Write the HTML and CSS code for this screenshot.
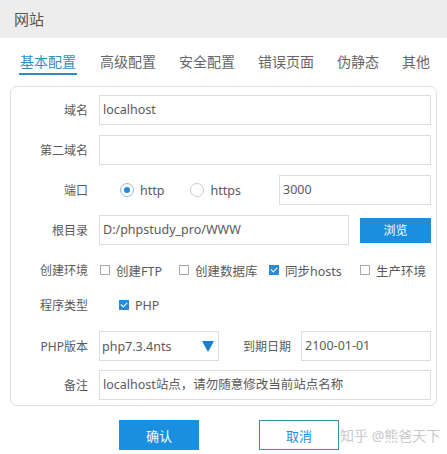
FILE: index.html
```html
<!DOCTYPE html>
<html lang="zh-CN">
<head>
    <meta charset="UTF-8">
    <title>网站</title>
    <link rel="stylesheet" href="styles.css">
</head>
<body>
    <div class="dialog">
        <div class="title-bar">网站</div>

        <div class="tabs">
            <span class="tab active">基本配置</span>
            <span class="tab">高级配置</span>
            <span class="tab">安全配置</span>
            <span class="tab">错误页面</span>
            <span class="tab">伪静态</span>
            <span class="tab">其他</span>
        </div>

        <div class="card">
            <div class="row">
                <label class="row-label">域名</label>
                <div class="field">localhost</div>
            </div>
            <div class="row">
                <label class="row-label">第二域名</label>
                <div class="field"></div>
            </div>
            <div class="row">
                <label class="row-label">端口</label>
                <div class="radio-group">
                    <span class="radio checked"></span><span class="opt-text">http</span>
                    <span class="radio second"></span><span class="opt-text">https</span>
                </div>
                <div class="field port">3000</div>
            </div>
            <div class="row">
                <label class="row-label">根目录</label>
                <div class="field">D:/phpstudy_pro/WWW</div>
                <button class="btn-browse">浏览</button>
            </div>
            <div class="row row-env">
                <label class="row-label">创建环境</label>
                <div class="options">
                    <span class="opt opt-ftp"><span class="check"></span>创建FTP</span>
                    <span class="opt opt-db"><span class="check"></span>创建数据库</span>
                    <span class="opt opt-hosts"><span class="check checked"></span>同步hosts</span>
                    <span class="opt"><span class="check"></span>生产环境</span>
                </div>
            </div>
            <div class="row row-type">
                <label class="row-label">程序类型</label>
                <span class="opt opt-php"><span class="check checked"></span>PHP</span>
            </div>
            <div class="row row-php">
                <label class="row-label">PHP版本</label>
                <div class="select">
                    <span>php7.3.4nts</span>
                    <span class="arrow"></span>
                </div>
                <label class="inline-label">到期日期</label>
                <div class="field">2100-01-01</div>
            </div>
            <div class="row row-note">
                <label class="row-label">备注</label>
                <div class="field">localhost站点，请勿随意修改当前站点名称</div>
            </div>
        </div>

        <div class="actions">
            <button class="btn btn-ok">确认</button>
            <button class="btn btn-cancel">取消</button>
            <span class="watermark">知乎 @熊爸天下</span>
        </div>
    </div>
</body>
</html>
```

FILE: styles.css
```css
body {
    margin: 0;
    background: #fff;
    font-family: "Noto Sans", "Noto Sans CJK SC", sans-serif;
    color: #5a5a5a;
}

.dialog {
    position: relative;
    width: 447px;
    height: 454px;
    overflow: hidden;
}

.title-bar {
    height: 38px;
    line-height: 38px;
    padding-left: 14px;
    background: #ededed;
    font-size: 15px;
    color: #555;
}

/* Tabs */
.tabs {
    display: flex;
    gap: 23px;
    padding: 14px 0 0 20px;
    height: 34px;
    box-sizing: border-box;
    margin-bottom: 14px;
}

.tab {
    font-size: 14px;
    line-height: 20px;
    color: #666;
    height: 21px;
}

.tab.active {
    color: #2f8fc0;
    border-bottom: 2px solid #2f8fc0;
    padding: 0 1px;
    margin-left: -1px;
    margin-right: 0;
}

/* Card */
.card {
    margin: 0 10px;
    border: 1px solid #ddd;
    border-radius: 7px;
    padding: 8px 5px 4px 0;
    height: 320px;
    box-sizing: border-box;
}

.row {
    display: flex;
    align-items: center;
    height: 30px;
    margin-bottom: 10px;
    font-size: 12px;
}

.row-label {
    width: 88px;
    flex-shrink: 0;
    padding-right: 11px;
    box-sizing: border-box;
    text-align: right;
    font-size: 12px;
    color: #5a5a5a;
}

.field {
    flex: 1;
    height: 30px;
    line-height: 28px;
    border: 1px solid #ddd;
    box-sizing: border-box;
    padding-left: 3px;
    font-size: 12.5px;
    color: #5a5a5a;
    white-space: nowrap;
}

.field.port {
    flex: none;
    width: 152px;
    margin-left: auto;
}

/* Radios */
.radio-group {
    display: flex;
    align-items: center;
    padding-left: 21px;
}

.radio {
    width: 14px;
    height: 14px;
    border: 1px solid #ccc;
    border-radius: 50%;
    box-sizing: border-box;
    position: relative;
    margin-right: 6px;
}

.radio.second {
    margin-left: 26px;
}

.radio.checked {
    border-color: #8cbde6;
}

.radio.checked::after {
    content: "";
    position: absolute;
    left: 3px;
    top: 3px;
    width: 6px;
    height: 6px;
    border-radius: 50%;
    background: #2a86d6;
}

.opt-text {
    font-size: 12.5px;
    color: #5a5a5a;
}

.btn-browse {
    width: 71px;
    height: 25px;
    margin-left: 11px;
    border: none;
    background: #1a8fe0;
    color: #fff;
    font-family: inherit;
    font-size: 12px;
    padding: 0;
}

/* Checkboxes */
.row-env {
    margin-bottom: 5px;
}

.row-type {
    margin-bottom: 11px;
}

.row-php {
    margin-bottom: 9px;
}

.options {
    display: flex;
    align-items: center;
}

.opt {
    display: flex;
    align-items: center;
    font-size: 12.5px;
    color: #5a5a5a;
    white-space: nowrap;
}

.opt-ftp { width: 80px; padding-left: 1px; box-sizing: border-box; }
.opt-db { width: 90px; }
.opt-hosts { width: 91px; }

.opt-php {
    margin-left: 20px;
}

.check {
    width: 10px;
    height: 10px;
    border: 1px solid #aaa;
    box-sizing: border-box;
    margin-right: 6px;
    position: relative;
}

.check.checked {
    border: none;
    background: #2b8ad6;
}

.check.checked::after {
    content: "";
    position: absolute;
    left: 3px;
    top: 1px;
    width: 3px;
    height: 5px;
    border: solid #fff;
    border-width: 0 1.5px 1.5px 0;
    transform: rotate(45deg);
}

/* Select */
.select {
    width: 120px;
    height: 30px;
    border: 1px solid #ddd;
    box-sizing: border-box;
    display: flex;
    align-items: center;
    justify-content: space-between;
    padding: 0 4px 0 2px;
    font-size: 12.5px;
    color: #5a5a5a;
}

.arrow {
    width: 0;
    height: 0;
    border-left: 6px solid transparent;
    border-right: 6px solid transparent;
    border-top: 11px solid #1a7fd3;
}

.inline-label {
    margin: 0 10px 0 24px;
    font-size: 12px;
    color: #5a5a5a;
}

.row-note {
    margin-bottom: 0;
}

/* Bottom buttons */
.actions {
    display: flex;
    gap: 60px;
    padding: 14px 0 0 119px;
}

.btn {
    width: 80px;
    height: 30px;
    font-family: inherit;
    font-size: 13px;
    padding: 0;
}

.btn-ok {
    border: none;
    background: #1a8fe0;
    color: #fff;
}

.btn-cancel {
    background: #fff;
    border: 1px solid #3f8fa8;
    color: #1a8fe0;
}

.watermark {
    position: absolute;
    left: 340px;
    top: 425px;
    font-size: 14px;
    color: #cacaca;
    white-space: nowrap;
}
```
